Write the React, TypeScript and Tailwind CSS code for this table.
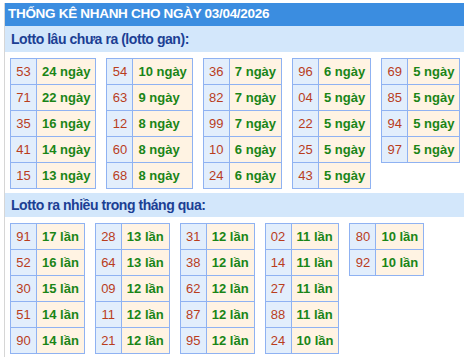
import React from "react";

type Row = [string, string];

const gan: Row[][] = [
  [["53", "24 ngày"], ["71", "22 ngày"], ["35", "16 ngày"], ["41", "14 ngày"], ["15", "13 ngày"]],
  [["54", "10 ngày"], ["63", "9 ngày"], ["12", "8 ngày"], ["60", "8 ngày"], ["68", "8 ngày"]],
  [["36", "7 ngày"], ["82", "7 ngày"], ["99", "7 ngày"], ["10", "6 ngày"], ["24", "6 ngày"]],
  [["96", "6 ngày"], ["04", "5 ngày"], ["22", "5 ngày"], ["25", "5 ngày"], ["43", "5 ngày"]],
  [["69", "5 ngày"], ["85", "5 ngày"], ["94", "5 ngày"], ["97", "5 ngày"]],
];

const nhieu: Row[][] = [
  [["91", "17 lần"], ["52", "16 lần"], ["30", "15 lần"], ["51", "14 lần"], ["90", "14 lần"]],
  [["28", "13 lần"], ["64", "13 lần"], ["09", "12 lần"], ["11", "12 lần"], ["21", "12 lần"]],
  [["31", "12 lần"], ["38", "12 lần"], ["62", "12 lần"], ["87", "12 lần"], ["95", "12 lần"]],
  [["02", "11 lần"], ["14", "11 lần"], ["27", "11 lần"], ["88", "11 lần"], ["24", "10 lần"]],
  [["80", "10 lần"], ["92", "10 lần"]],
];

function LotoTable({ rows }: { rows: Row[] }) {
  return (
    <div className="flex flex-col shrink-0 self-start border-l border-t border-[#8fb2f2]">
      {rows.map(([num, val]) => (
        <div key={num} className="flex h-[26px]">
          <div className="w-[26px] shrink-0 flex items-center justify-center border-r border-b border-[#8fb2f2] bg-[#e2eefc] text-[#b93d1d]">
            {num}
          </div>
          <div className="flex-1 flex items-center whitespace-nowrap px-[5px] border-r border-b border-[#8fb2f2] bg-[#fff3e3] text-[#1a8517] font-bold">
            {val}
          </div>
        </div>
      ))}
    </div>
  );
}

function SectionTitle({ text, tall }: { text: string; tall?: boolean }) {
  return (
    <div
      className={`flex items-center px-[6px] bg-[#d3e7fb] text-[#1c3f94] font-bold text-[14px] tracking-[-0.45px] whitespace-nowrap ${
        tall ? "h-[26px]" : "h-[24px]"
      }`}
    >
      {text}
    </div>
  );
}

export default function App() {
  return (
    <div className="w-[464px] h-[357px] bg-white overflow-hidden pt-[3px] pl-[4px] text-[13px] font-['Liberation_Sans',Arial,sans-serif]">
      <div className="h-full border-l border-[#d6d6d6]">
        <div className="h-[23px] flex items-center px-[3px] bg-[#3b8de0] text-white font-bold text-[13.5px] tracking-[-0.3px] whitespace-nowrap">
          THỐNG KÊ NHANH CHO NGÀY 03/04/2026
        </div>
        <SectionTitle text="Lotto lâu chưa ra (lotto gan):" tall />
        <div className="flex gap-[10px] pl-[5px] mt-[6px]">
          {gan.map((rows, i) => (
            <LotoTable key={i} rows={rows} />
          ))}
        </div>
        <div className="mt-[4px]">
          <SectionTitle text="Lotto ra nhiều trong tháng qua:" />
        </div>
        <div className="flex gap-[10px] pl-[5px] mt-[6px]">
          {nhieu.map((rows, i) => (
            <LotoTable key={i} rows={rows} />
          ))}
        </div>
      </div>
    </div>
  );
}
